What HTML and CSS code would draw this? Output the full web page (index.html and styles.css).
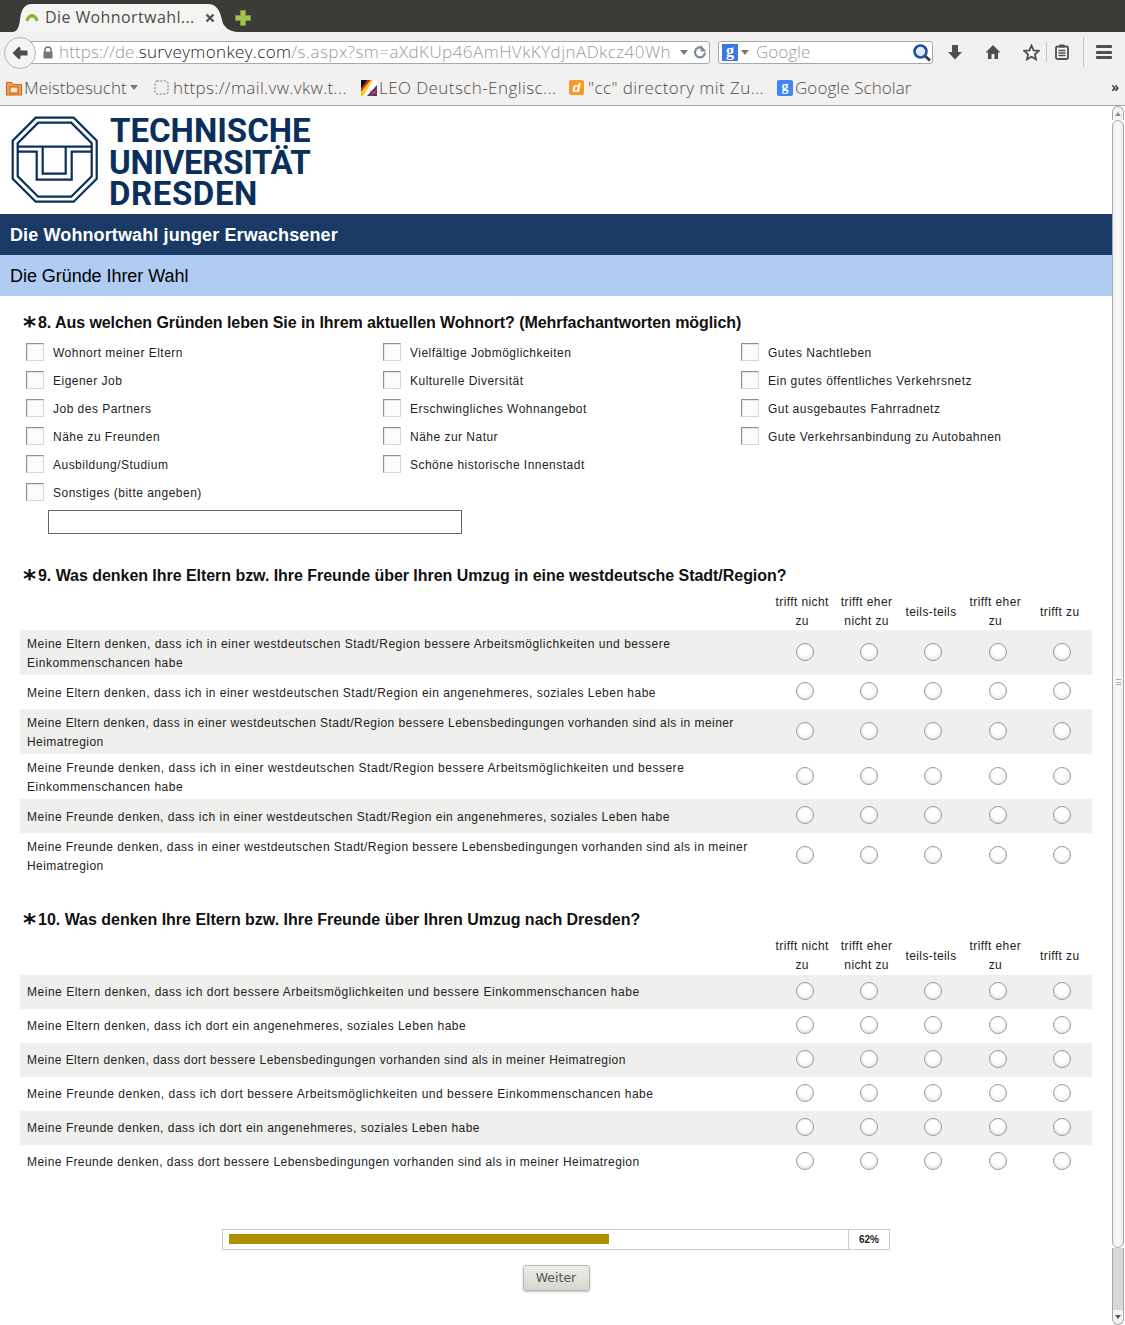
FILE: index.html
```html
<!DOCTYPE html>
<html lang="de">
<head>
<meta charset="utf-8">
<title>Die Wohnortwahl junger Erwachsener</title>
<link rel="stylesheet" href="styles.css">
</head>
<body>
<header class="browser">
  <div class="tabbar">
    <div class="tab">
      <svg class="tab-shape" width="226" height="28" viewBox="0 0 226 28"><path d="M0 28C6 28 7 22 8 16C9 6 12 0 20 0H196C204 0 208 6 210 16C211 23 218 28 226 28Z" fill="#f5f4f3"/></svg>
      <svg class="tab-fav" width="16" height="16" viewBox="0 0 16 16"><path d="M1.500 10.500C2.500 5.500 6 4 8 4C10 4 13.500 5.500 14.500 10.500L11.500 11.500C11 8.500 9.500 7.500 8 7.500C6.500 7.500 5 8.500 4.500 11.500Z" fill="#8db63c"/></svg>
      <span class="tab-title">Die Wohnortwahl...</span>
      <svg class="tab-close" width="10" height="10" viewBox="0 0 10 10"><path d="M1.500 1.500L8.500 8.500M8.500 1.500L1.500 8.500" stroke="#55534f" stroke-width="2.400"/></svg>
    </div>
    <svg class="newtab" width="16" height="16" viewBox="0 0 16 16"><path d="M5.500 0.500H10.500V5.500H15.500V10.500H10.500V15.500H5.500V10.500H0.500V5.500H5.500Z" fill="#a3c24f" stroke="#7f9c3a" stroke-width="0.700"/></svg>
  </div>
  <div class="navbar">
    <div class="back"><svg width="16" height="14" viewBox="0 0 16 14"><path d="M7 0.500L0.500 7L7 13.500L8.500 12V9.500H15.500V4.500H8.500V2Z" fill="#4d4d4d"/></svg></div>
    <div class="urlbar">
      <svg class="lock" width="10" height="13" viewBox="0 0 10 13"><path d="M2 6V4a3 3 0 0 1 6 0V6" fill="none" stroke="#777" stroke-width="1.600"/><rect x="0.500" y="5.500" width="9" height="7" rx="1" fill="#777"/></svg>
      <span class="url"><span class="url-proto">https://de.</span><b>surveymonkey.com</b>/s.aspx?sm=aXdKUp46AmHVkKYdjnADkcz40Wh</span>
      <i class="caret"></i>
      <svg class="reload" width="14" height="14" viewBox="0 0 14 14"><path d="M12 7.500A5 5 0 1 1 9 2.800" fill="none" stroke="#7b8a99" stroke-width="2.200"/><path d="M7.500 0V6.500H13.500Z" fill="#7b8a99"/></svg>
    </div>
    <div class="search">
      <span class="g-badge">g</span>
      <i class="caret"></i>
      <span class="search-text">Google</span>
      <svg class="glass" width="20" height="20" viewBox="0 0 20 20"><path d="M12.500 12.500L18 17.500" stroke="#333" stroke-width="2.800"/><circle cx="8.500" cy="8.500" r="6" fill="#dfe9f7" stroke="#1f4fa0" stroke-width="2.600"/></svg>
    </div>
    <div class="tools">
      <svg class="t-down" width="16" height="16" viewBox="0 0 16 16"><path d="M5 1H11V8H15L8 15.500L1 8H5Z" fill="#4f4f4f"/></svg>
      <svg class="t-home" width="16" height="16" viewBox="0 0 16 16"><path d="M8 1L0.500 8.500H3V15H6.500V10H9.500V15H13V8.500H15.500Z" fill="#4f4f4f"/></svg>
      <svg class="t-star" width="17" height="17" viewBox="0 0 17 17"><path d="M8.500 1.500L10.600 6.300L15.800 6.800L11.900 10.300L13 15.400L8.500 12.800L4 15.400L5.100 10.300L1.200 6.800L6.400 6.300Z" fill="#f7f6f5" stroke="#4f4f4f" stroke-width="1.800"/></svg>
      <i class="t-sep"></i>
      <svg class="t-clip" width="14" height="16" viewBox="0 0 14 16"><rect x="1" y="2.500" width="12" height="12.500" rx="1.500" fill="#f7f6f5" stroke="#4f4f4f" stroke-width="1.800"/><rect x="4.500" y="0.500" width="5" height="3" fill="#4f4f4f"/><path d="M3.500 6.500H10.500M3.500 9H10.500M3.500 11.500H10.500" stroke="#4f4f4f" stroke-width="1.300"/></svg>
      <i class="t-sep t-sep-tall"></i>
      <div class="t-menu"><i></i><i></i><i></i></div>
    </div>
  </div>
  <div class="bookmarks">
    <svg class="bm-ico" width="16" height="16" viewBox="0 0 16 16"><path d="M0.500 2.500H6L7.500 4.500H15.500V15H0.500Z" fill="#f0a050" stroke="#c4651d"/><rect x="4" y="7" width="8" height="6" fill="#fbe3c4" stroke="#b85a14"/></svg>
    <span class="bm-text bm-1">Meistbesucht</span>
    <i class="caret bm-caret"></i>
    <svg class="bm-ico bm-gap-a" width="15" height="15" viewBox="0 0 15 15"><rect x="1" y="1" width="13" height="13" rx="2" fill="none" stroke="#777" stroke-dasharray="2 1.500"/></svg>
    <span class="bm-text bm-2">https://mail.vw.vkw.t...</span>
    <svg class="bm-ico bm-gap-b" width="16" height="16" viewBox="0 0 16 16"><rect width="16" height="16" fill="#fff"/><path d="M0 0H7L0 9Z" fill="#111"/><path d="M0 9L7 0H10L0 12Z" fill="#d22"/><path d="M0 12L10 0H12L2 16H0Z" fill="#fc0"/><path d="M6 16L16 5V16Z" fill="#2a3f8c"/><path d="M10 16L16 9M9 11L16 14" stroke="#e33" stroke-width="1.200"/></svg>
    <span class="bm-text bm-3">LEO Deutsch-Englisc...</span>
    <span class="bm-ico bm-gap-c d-ico">d</span>
    <span class="bm-text bm-4">"cc" directory mit Zu...</span>
    <span class="bm-ico bm-gap-c gs-ico">g</span>
    <span class="bm-text bm-5">Google Scholar</span>
    <span class="bm-more">»</span>
  </div>
</header>

<div class="viewport">
  <main class="page">
    <div class="logo">
      <svg class="logo-mark" width="90" height="90" viewBox="0 0 90 90">
        <g transform="translate(1.700 0.700)" fill="none" stroke="#0b2f5b" stroke-width="2.200">
          <path d="M24 1H62L85 24V62L62 85H24L1 62V24Z"/>
          <path d="M26.500 6H59.500L80 26.500V59.500L59.500 80H26.500L6 59.500V26.500Z"/>
          <path d="M6 30H80M31 30V57H54V30"/>
          <path d="M6 35H25V63H60V35H80"/>
        </g>
      </svg>
      <div class="logo-text"><span class="lt lt-1">TECHNISCHE</span><span class="lt lt-2">UNIVERSITÄT</span><span class="lt lt-3">DRESDEN</span></div>
    </div>
    <h1 class="survey-title">Die Wohnortwahl junger Erwachsener</h1>
    <h2 class="page-title">Die Gründe Ihrer Wahl</h2>

    <section class="q q8">
      <h3 class="q-head"><span class="star">*</span>8. Aus welchen Gründen leben Sie in Ihrem aktuellen Wohnort? (Mehrfachantworten möglich)</h3>
      <div class="opts">
        <div class="opt-col">
          <label class="opt"><i class="cb"></i>Wohnort meiner Eltern</label>
          <label class="opt"><i class="cb"></i>Eigener Job</label>
          <label class="opt"><i class="cb"></i>Job des Partners</label>
          <label class="opt"><i class="cb"></i>Nähe zu Freunden</label>
          <label class="opt"><i class="cb"></i>Ausbildung/Studium</label>
          <label class="opt"><i class="cb"></i>Sonstiges (bitte angeben)</label>
        </div>
        <div class="opt-col">
          <label class="opt"><i class="cb"></i>Vielfältige Jobmöglichkeiten</label>
          <label class="opt"><i class="cb"></i>Kulturelle Diversität</label>
          <label class="opt"><i class="cb"></i>Erschwingliches Wohnangebot</label>
          <label class="opt"><i class="cb"></i>Nähe zur Natur</label>
          <label class="opt"><i class="cb"></i>Schöne historische Innenstadt</label>
        </div>
        <div class="opt-col">
          <label class="opt"><i class="cb"></i>Gutes Nachtleben</label>
          <label class="opt"><i class="cb"></i>Ein gutes öffentliches Verkehrsnetz</label>
          <label class="opt"><i class="cb"></i>Gut ausgebautes Fahrradnetz</label>
          <label class="opt"><i class="cb"></i>Gute Verkehrsanbindung zu Autobahnen</label>
        </div>
      </div>
      <div class="other-input"></div>
    </section>

    <section class="q q9">
      <h3 class="q-head"><span class="star">*</span>9. Was denken Ihre Eltern bzw. Ihre Freunde über Ihren Umzug in eine westdeutsche Stadt/Region?</h3>
      <div class="matrix">
        <div class="m-row m-header"><div></div><div>trifft nicht zu</div><div>trifft eher nicht zu</div><div>teils-teils</div><div>trifft eher zu</div><div>trifft zu</div></div>
        <div class="m-row"><div class="m-label wide">Meine Eltern denken, dass ich in einer westdeutschen Stadt/Region bessere Arbeitsmöglichkeiten und bessere Einkommenschancen habe</div><div class="m-c"><i class="r"></i></div><div class="m-c"><i class="r"></i></div><div class="m-c"><i class="r"></i></div><div class="m-c"><i class="r"></i></div><div class="m-c"><i class="r"></i></div></div>
        <div class="m-row"><div class="m-label">Meine Eltern denken, dass ich in einer westdeutschen Stadt/Region ein angenehmeres, soziales Leben habe</div><div class="m-c"><i class="r"></i></div><div class="m-c"><i class="r"></i></div><div class="m-c"><i class="r"></i></div><div class="m-c"><i class="r"></i></div><div class="m-c"><i class="r"></i></div></div>
        <div class="m-row"><div class="m-label tight">Meine Eltern denken, dass in einer westdeutschen Stadt/Region bessere Lebensbedingungen vorhanden sind als in meiner Heimatregion</div><div class="m-c"><i class="r"></i></div><div class="m-c"><i class="r"></i></div><div class="m-c"><i class="r"></i></div><div class="m-c"><i class="r"></i></div><div class="m-c"><i class="r"></i></div></div>
        <div class="m-row"><div class="m-label wide">Meine Freunde denken, dass ich in einer westdeutschen Stadt/Region bessere Arbeitsmöglichkeiten und bessere Einkommenschancen habe</div><div class="m-c"><i class="r"></i></div><div class="m-c"><i class="r"></i></div><div class="m-c"><i class="r"></i></div><div class="m-c"><i class="r"></i></div><div class="m-c"><i class="r"></i></div></div>
        <div class="m-row"><div class="m-label">Meine Freunde denken, dass ich in einer westdeutschen Stadt/Region ein angenehmeres, soziales Leben habe</div><div class="m-c"><i class="r"></i></div><div class="m-c"><i class="r"></i></div><div class="m-c"><i class="r"></i></div><div class="m-c"><i class="r"></i></div><div class="m-c"><i class="r"></i></div></div>
        <div class="m-row"><div class="m-label tight">Meine Freunde denken, dass in einer westdeutschen Stadt/Region bessere Lebensbedingungen vorhanden sind als in meiner Heimatregion</div><div class="m-c"><i class="r"></i></div><div class="m-c"><i class="r"></i></div><div class="m-c"><i class="r"></i></div><div class="m-c"><i class="r"></i></div><div class="m-c"><i class="r"></i></div></div>
      </div>
    </section>

    <section class="q q10">
      <h3 class="q-head"><span class="star">*</span>10. Was denken Ihre Eltern bzw. Ihre Freunde über Ihren Umzug nach Dresden?</h3>
      <div class="matrix">
        <div class="m-row m-header"><div></div><div>trifft nicht zu</div><div>trifft eher nicht zu</div><div>teils-teils</div><div>trifft eher zu</div><div>trifft zu</div></div>
        <div class="m-row"><div class="m-label wide">Meine Eltern denken, dass ich dort bessere Arbeitsmöglichkeiten und bessere Einkommenschancen habe</div><div class="m-c"><i class="r"></i></div><div class="m-c"><i class="r"></i></div><div class="m-c"><i class="r"></i></div><div class="m-c"><i class="r"></i></div><div class="m-c"><i class="r"></i></div></div>
        <div class="m-row"><div class="m-label">Meine Eltern denken, dass ich dort ein angenehmeres, soziales Leben habe</div><div class="m-c"><i class="r"></i></div><div class="m-c"><i class="r"></i></div><div class="m-c"><i class="r"></i></div><div class="m-c"><i class="r"></i></div><div class="m-c"><i class="r"></i></div></div>
        <div class="m-row"><div class="m-label tight">Meine Eltern denken, dass dort bessere Lebensbedingungen vorhanden sind als in meiner Heimatregion</div><div class="m-c"><i class="r"></i></div><div class="m-c"><i class="r"></i></div><div class="m-c"><i class="r"></i></div><div class="m-c"><i class="r"></i></div><div class="m-c"><i class="r"></i></div></div>
        <div class="m-row"><div class="m-label wide">Meine Freunde denken, dass ich dort bessere Arbeitsmöglichkeiten und bessere Einkommenschancen habe</div><div class="m-c"><i class="r"></i></div><div class="m-c"><i class="r"></i></div><div class="m-c"><i class="r"></i></div><div class="m-c"><i class="r"></i></div><div class="m-c"><i class="r"></i></div></div>
        <div class="m-row"><div class="m-label">Meine Freunde denken, dass ich dort ein angenehmeres, soziales Leben habe</div><div class="m-c"><i class="r"></i></div><div class="m-c"><i class="r"></i></div><div class="m-c"><i class="r"></i></div><div class="m-c"><i class="r"></i></div><div class="m-c"><i class="r"></i></div></div>
        <div class="m-row"><div class="m-label tight">Meine Freunde denken, dass dort bessere Lebensbedingungen vorhanden sind als in meiner Heimatregion</div><div class="m-c"><i class="r"></i></div><div class="m-c"><i class="r"></i></div><div class="m-c"><i class="r"></i></div><div class="m-c"><i class="r"></i></div><div class="m-c"><i class="r"></i></div></div>
      </div>
    </section>

    <div class="progress">
      <div class="progress-track"><div class="progress-fill"></div></div>
      <div class="progress-pct">62%</div>
    </div>
    <div class="actions"><button class="next" type="button">Weiter</button></div>
  </main>
  <aside class="scrollbar">
    <div class="sb-btn"><i class="sb-up"></i></div>
    <div class="sb-thumb"><span class="sb-grip"></span></div>
    <div class="sb-track"></div>
    <div class="sb-btn sb-btn-down"><i class="sb-down"></i></div>
  </aside>
</div>
</body>
</html>
```
FILE: styles.css
```css
* { box-sizing: border-box; }
html, body { margin: 0; padding: 0; height: 100%; overflow: hidden; }
body { width: 1125px; height: 1325px; background: #fff; font-family: "Liberation Sans", Arial, sans-serif; color: #111; display: flex; flex-direction: column; }
i { display: block; font-style: normal; }

/* Browser chrome */
.browser { flex: none; height: 106px; background: #f2f1f0; border-bottom: 1px solid #a3a3a3; font-family: "Open Sans", sans-serif; }
.tabbar { height: 32px; background: #3c3b37; display: flex; align-items: flex-end; padding-left: 12px; }
.tab { width: 226px; height: 28px; display: flex; align-items: center; padding-left: 12px; padding-right: 23px; position: relative; }
.tab-shape { position: absolute; left: 0; top: 0; }
.tab-fav { flex: none; position: relative; }
.tab-title { font-size: 16px; letter-spacing: 0.400px; color: #4c4c4c; margin: -2px 0 0 5px; flex: 1; white-space: nowrap; position: relative; }
.tab-close { flex: none; position: relative; }
.newtab { align-self: center; margin: 4px 0 0 -3px; }
.navbar { height: 38px; display: flex; align-items: center; position: relative; padding-left: 30px; }
.back { position: absolute; left: 4px; top: 5px; width: 32px; height: 32px; border-radius: 50%; background: #f6f5f4; border: 1px solid #b4b4b4; display: flex; align-items: center; justify-content: center; z-index: 1; }
.urlbar { width: 680px; height: 23px; background: #fff; border: 1px solid #a8a8a8; border-radius: 0 3px 3px 0; display: flex; align-items: center; padding-left: 12px; margin-top: 2px; }
.lock { flex: none; }
.url { font-size: 17px; letter-spacing: 0.460px; color: #9a9a9a; margin: -2px 0 0 6px; width: 613px; white-space: nowrap; overflow: hidden; font-weight: 300; }
.url-proto { letter-spacing: 0.100px; }
.url b { font-weight: 300; color: #222; letter-spacing: 0.350px; }
.caret { width: 0; height: 0; border-left: 4.500px solid transparent; border-right: 4.500px solid transparent; border-top: 5px solid #777; }
.urlbar .caret { margin-left: 8px; }
.reload { margin-left: 5px; }
.search { width: 215px; height: 23px; background: #fff; border: 1px solid #a8a8a8; border-radius: 3px; margin-left: 8px; margin-top: 2px; display: flex; align-items: center; padding-left: 3px; position: relative; }
.g-badge { width: 16px; height: 17px; background: #3b78e7; color: #fff; font: bold 16px "Liberation Serif", serif; text-align: center; line-height: 14px; }
.search .caret { margin-left: 3px; }
.search-text { font-size: 17px; color: #9a9a9a; margin: -2px 0 0 7px; font-weight: 300; }
.glass { position: absolute; right: 0; top: 1px; }
.tools { position: relative; flex: 1; height: 100%; display: flex; align-items: center; padding-left: 14px; margin-top: 2px; }
.t-down { margin-left: 0; }
.t-home { margin-left: 22px; }
.t-star { margin-left: 22px; }
.t-sep { width: 1px; height: 20px; background: #c4c3c2; margin-left: 6px; }
.t-clip { margin-left: 8px; }
.t-sep-tall { height: 30px; margin-left: 14px; }
.t-menu { margin-left: 12px; display: flex; flex-direction: column; gap: 2.500px; }
.t-menu i { width: 16px; height: 3px; background: #4f4f4f; border-radius: 1px; }
.bookmarks { height: 35px; display: flex; align-items: center; padding-left: 6px; color: #4d4d4d; position: relative; font-size: 17px; font-weight: 300; }
.bm-text { white-space: nowrap; display: block; }
.bm-1 { margin-left: 2px; width: 103px; }
.bm-caret { margin-left: 3px; }
.bm-ico { flex: none; }
.bm-gap-a { margin-left: 16px; }
.bm-gap-b { margin-left: 15px; }
.bm-gap-c { margin-left: 13px; }
.bm-2 { margin-left: 4px; width: 173px; letter-spacing: 0.360px; }
.bm-3 { margin-left: 2px; width: 177px; letter-spacing: 0.420px; }
.bm-4 { margin-left: 4px; width: 176px; letter-spacing: 0.420px; }
.bm-5 { margin-left: 2px; letter-spacing: 0.070px; }
.bm-more { position: absolute; right: 6px; top: 7px; font-size: 14px; color: #222; font-weight: 600; }
.d-ico { width: 15px; height: 15px; background: #f79a2b; border-radius: 2px; color: #fff; font: italic bold 13px/15px "Liberation Sans", sans-serif; text-align: center; }
.gs-ico { width: 16px; height: 16px; background: #3f86f2; border-radius: 2px; color: #fff; font: bold 14px/13px "Liberation Serif", serif; text-align: center; }

/* Page */
.viewport { flex: 1; display: flex; min-height: 0; }
.page { width: 1112px; flex: none; overflow: hidden; }
.logo { height: 108px; display: flex; align-items: flex-start; padding: 9px 0 0 10px; }
.logo-mark { flex: none; margin-top: 1px; }
.logo-text { font-family: "Roboto", sans-serif; font-weight: 700; color: #0b2f5b; font-size: 33px; line-height: 31.500px; margin-left: 10px; }
.lt { display: block; white-space: nowrap; }
.lt-1 { letter-spacing: 0; }
.lt-2 { letter-spacing: -0.300px; margin-left: -1px; }
.lt-3 { letter-spacing: 0.600px; margin-left: -1px; }
.survey-title { margin: 0; height: 41px; background: #1a3a66; color: #fff; font-size: 18px; font-weight: bold; line-height: 43px; letter-spacing: 0.120px; padding-left: 10px; }
.page-title { margin: 0; height: 41px; background: #b1ccf2; color: #000; font-size: 18px; font-weight: normal; line-height: 42px; letter-spacing: -0.050px; padding-left: 10px; }
.q { padding: 0 20px; }
.q-head { margin: 0; font-size: 16px; font-weight: bold; line-height: 20px; color: #111; display: flex; padding-left: 3px; white-space: nowrap; }
.star { font-family: "DejaVu Sans", sans-serif; font-size: 25px; line-height: 25px; width: 15px; height: 20px; font-weight: bold; flex: none; letter-spacing: 0; }
.q8 { padding-top: 17px; }
.q8 .q-head { letter-spacing: -0.070px; }
.q9 .q-head { letter-spacing: -0.045px; }
.q10 .q-head { letter-spacing: -0.015px; }
.opts { display: grid; grid-template-columns: 357px 358px 1fr; margin-top: 5px; padding-left: 6px; }
.opt { display: flex; align-items: center; height: 28px; padding-top: 2px; font-size: 12px; letter-spacing: 0.480px; color: #222; white-space: nowrap; }
.cb { width: 18px; height: 18px; background: #fbfbfb; border: 1px solid; border-color: #8f8f8f #d8d8d8 #d8d8d8 #8f8f8f; box-shadow: inset 1px 1px 0 #e6e6e6; margin: -3px 9px 0 0; flex: none; }
.other-input { width: 414px; height: 24px; border: 1px solid #666; margin: 4px 0 0 28px; background: #fff; }
.q9 { padding-top: 32px; }
.q10 { padding-top: 32px; }
.matrix { display: flex; flex-direction: column; }
.m-row { display: grid; grid-template-columns: 750px repeat(5, 1fr); font-size: 12px; letter-spacing: 0.485px; line-height: 19px; color: #222; min-height: 34px; }
.m-row:nth-child(even) { background: #efefed; }
.m-header { text-align: center; padding: 7px 0 0; align-items: center; letter-spacing: 0.400px; }
.q9 .m-header { margin-bottom: -1px; }
.m-label { padding: 5px 0 2px 7px; align-self: center; }
.q10 .m-label { padding: 4px 0 3px 7px; }
.m-label.wide { letter-spacing: 0.520px; }
.m-label.tight { letter-spacing: 0.440px; }
.m-c { display: flex; align-items: center; justify-content: center; padding-left: 5px; }
.r { width: 18px; height: 18px; border-radius: 50%; border: 1px solid #9a9a9a; background: radial-gradient(circle at 50% 40%, #fff 40%, #dcdcdc 100%); margin-top: -2px; }
.progress { display: flex; width: 668px; height: 21px; margin: 50px 0 0 222px; border: 1px solid #ccc; }
.progress-track { flex: 1; padding: 4px 6px; }
.progress-fill { width: 380px; height: 10px; background: #ae8f00; }
.progress-pct { width: 41px; border-left: 1px solid #ccc; font-size: 10px; font-weight: bold; text-align: center; line-height: 19px; color: #222; }
.actions { display: flex; justify-content: center; margin-top: 15px; }
.next { width: 67px; height: 26px; background: linear-gradient(#eeeee9, #d6d6ce); border: 1px solid #b9b9b3; border-radius: 3px; box-shadow: 0 1px 2px rgba(0,0,0,.25); font: 12.500px/22px "DejaVu Sans", sans-serif; color: #555; padding: 0; }

/* Scrollbar */
.scrollbar { flex: 1; display: flex; flex-direction: column; background: #fff; padding-right: 1px; }
.sb-btn { height: 14px; border: 1px solid #a8a8a8; border-bottom: 0; border-radius: 6px 6px 0 0; background: #f4f3f2; display: flex; justify-content: center; align-items: center; }
.sb-btn-down { border-top: 0; border-bottom: 1px solid #a8a8a8; border-radius: 0 0 6px 6px; height: 15px; }
.sb-up { border-left: 3px solid transparent; border-right: 3px solid transparent; border-bottom: 4px solid #888; }
.sb-down { border-left: 3px solid transparent; border-right: 3px solid transparent; border-top: 4px solid #555; }
.sb-thumb { height: 1128px; border: 1px solid #a8a8a8; border-radius: 6px; background: linear-gradient(90deg, #f0efee, #fbfafa 50%, #eeedec); display: flex; align-items: center; justify-content: center; }
.sb-grip { width: 5px; height: 6px; margin-bottom: 4px; border-top: 1px solid #aaa; border-bottom: 1px solid #aaa; background: linear-gradient(#aaa, #aaa) center / 100% 1px no-repeat; }
.sb-track { flex: 1; background: #d8d8d8; border-left: 1px solid #a8a8a8; border-right: 1px solid #a8a8a8; }
```
